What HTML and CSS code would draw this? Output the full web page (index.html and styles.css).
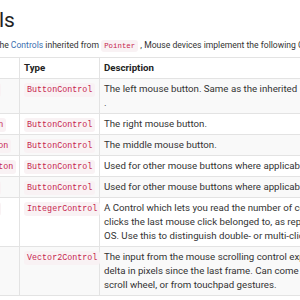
FILE: index.html
```html
<!doctype html>
<html lang="en">
<head>
  <meta charset="UTF-8">
  <meta name="viewport" content="width=device-width, initial-scale=1">
  <title>Mouse Controls</title>
  <link rel="stylesheet" href="styles.css">
</head>
<body>
<div class="page">
  <h2 class="title">Controls</h2>
  <p class="intro">In addition to the <a href="#">Controls</a> inherited from <code>Pointer</code> , Mouse devices implement the following Controls:</p>
  <table class="controls">
    <thead>
      <tr>
        <th class="col-name">Control</th>
        <th class="col-type">Type</th>
        <th class="col-desc">Description</th>
      </tr>
    </thead>
    <tbody>
      <tr>
        <td><code>leftButton</code></td>
        <td><code>ButtonControl</code></td>
        <td>The left mouse button. Same as the inherited <code>Pointer.press</code><br>.</td>
      </tr>
      <tr>
        <td><code>rightButton</code></td>
        <td><code>ButtonControl</code></td>
        <td>The right mouse button.</td>
      </tr>
      <tr>
        <td><code>middleButton</code></td>
        <td><code>ButtonControl</code></td>
        <td>The middle mouse button.</td>
      </tr>
      <tr>
        <td><code>forwardButton</code></td>
        <td><code>ButtonControl</code></td>
        <td>Used for other mouse buttons where applicable.</td>
      </tr>
      <tr>
        <td><code>backButton</code></td>
        <td><code>ButtonControl</code></td>
        <td>Used for other mouse buttons where applicable.</td>
      </tr>
      <tr>
        <td><code>clickCount</code></td>
        <td><code>IntegerControl</code></td>
        <td>A Control which lets you read the number of consecutive<br>clicks the last mouse click belonged to, as reported by the<br>OS. Use this to distinguish double- or multi-clicks.</td>
      </tr>
      <tr>
        <td><code>scroll</code></td>
        <td><code>Vector2Control</code></td>
        <td>The input from the mouse scrolling control expressed as a<br>delta in pixels since the last frame. Can come from a physical<br>scroll wheel, or from touchpad gestures.</td>
      </tr>
    </tbody>
  </table>
</div>
</body>
</html>
```

FILE: styles.css
```css
html, body {
  margin: 0;
  overflow: hidden;
  background: white;
}
body {
  font-family: Roboto, "Noto Sans", sans-serif;
  font-size: 9.7px;
  color: #333;
}
.page {
  margin-left: -60px;
  width: 660px;
}
.title {
  margin: 6px 0 0 -4px;
  font-size: 21px;
  font-weight: 400;
  line-height: 28px;
  color: #222;
}
.intro {
  margin: 4px 0 0 4.5px;
  font-size: 8.6px;
  line-height: 14px;
}
.intro a {
  color: #3b6fb0;
  text-decoration: none;
}
code {
  font-family: "Liberation Mono", "DejaVu Sans Mono", monospace;
  font-size: 8.4px;
  line-height: 1;
  color: #c7254e;
  background: #f9f2f4;
  padding: 2px 3px;
  border-radius: 3px;
}
.intro code {
  font-size: 7.4px;
}
.controls {
  margin-top: 5px;
  border-collapse: collapse;
  table-layout: fixed;
  width: 580px;
}
.col-name { width: 79px; }
.col-type { width: 80px; }
.controls th,
.controls td {
  box-sizing: border-box;
  border: 1px solid #e3e3e3;
  padding: 3px 4px;
  line-height: 14px;
  text-align: left;
  vertical-align: top;
  white-space: nowrap;
}
.controls th {
  font-weight: 700;
  color: #222;
}
.controls tbody tr:nth-child(odd) {
  background: #f9f9f9;
}
```
